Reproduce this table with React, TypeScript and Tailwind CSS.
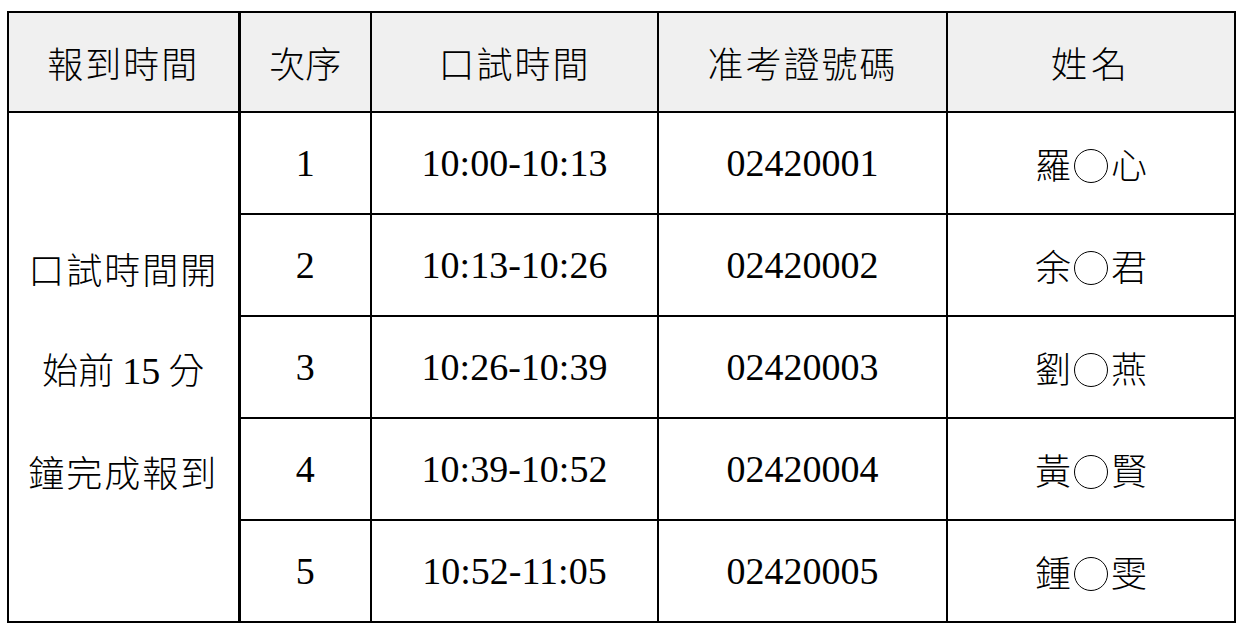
const rows = [
  { no: "1", time: "10:00-10:13", id: "02420001", name: ["羅", "心"] },
  { no: "2", time: "10:13-10:26", id: "02420002", name: ["余", "君"] },
  { no: "3", time: "10:26-10:39", id: "02420003", name: ["劉", "燕"] },
  { no: "4", time: "10:39-10:52", id: "02420004", name: ["黃", "賢"] },
  { no: "5", time: "10:52-11:05", id: "02420005", name: ["鍾", "雯"] },
];

const cjk = "font-['Noto_Sans_CJK_TC',sans-serif] font-light text-[36px]";

export default function App() {
  return (
    <div className="w-[1248px] h-[627px] bg-white pt-[11px] pl-[7px] font-['Liberation_Serif','Noto_Sans_CJK_TC',serif] text-[38px] text-black">
      <table className="table-fixed border-collapse border-2 border-black w-[1227px]">
        <colgroup>
          <col className="w-[231px]" />
          <col className="w-[132px]" />
          <col className="w-[287px]" />
          <col className="w-[289px]" />
          <col className="w-[288px]" />
        </colgroup>
        <thead>
          <tr className="h-[100px] bg-[#f0f0f0]">
            <th className={`border-2 border-r-[3px] border-black tracking-[2px] ${cjk}`}>報到時間</th>
            <th className={`border-2 border-black ${cjk}`}>次序</th>
            <th className={`border-2 border-black tracking-[2px] ${cjk}`}>口試時間</th>
            <th className={`border-2 border-black tracking-[2px] ${cjk}`}>准考證號碼</th>
            <th className={`border-2 border-black tracking-[4px] ${cjk}`}>姓名</th>
          </tr>
        </thead>
        <tbody>
          {rows.map((r, i) => (
            <tr key={r.no} className="h-[102px]">
              {i === 0 && (
                <td rowSpan={5} className="border-2 border-r-[3px] border-black text-center align-middle">
                  <div className="flex flex-col leading-[100px] pt-[4px]">
                    <span className={`tracking-[2px] ${cjk}`}>口試時間開</span>
                    <span>
                      <span className={cjk}>始前 </span>15<span className={cjk}> 分</span>
                    </span>
                    <span className={`tracking-[2px] ${cjk}`}>鐘完成報到</span>
                  </div>
                </td>
              )}
              <td className="border-2 border-black text-center">{r.no}</td>
              <td className="border-2 border-black text-center">{r.time}</td>
              <td className="border-2 border-black text-center">{r.id}</td>
              <td className={`border-2 border-black text-center ${cjk}`}>
                {r.name[0]}
                <span className="inline-block w-[34px] h-[34px] rounded-full border border-black align-[-4px] mx-[3px]" />
                {r.name[1]}
              </td>
            </tr>
          ))}
        </tbody>
      </table>
    </div>
  );
}
